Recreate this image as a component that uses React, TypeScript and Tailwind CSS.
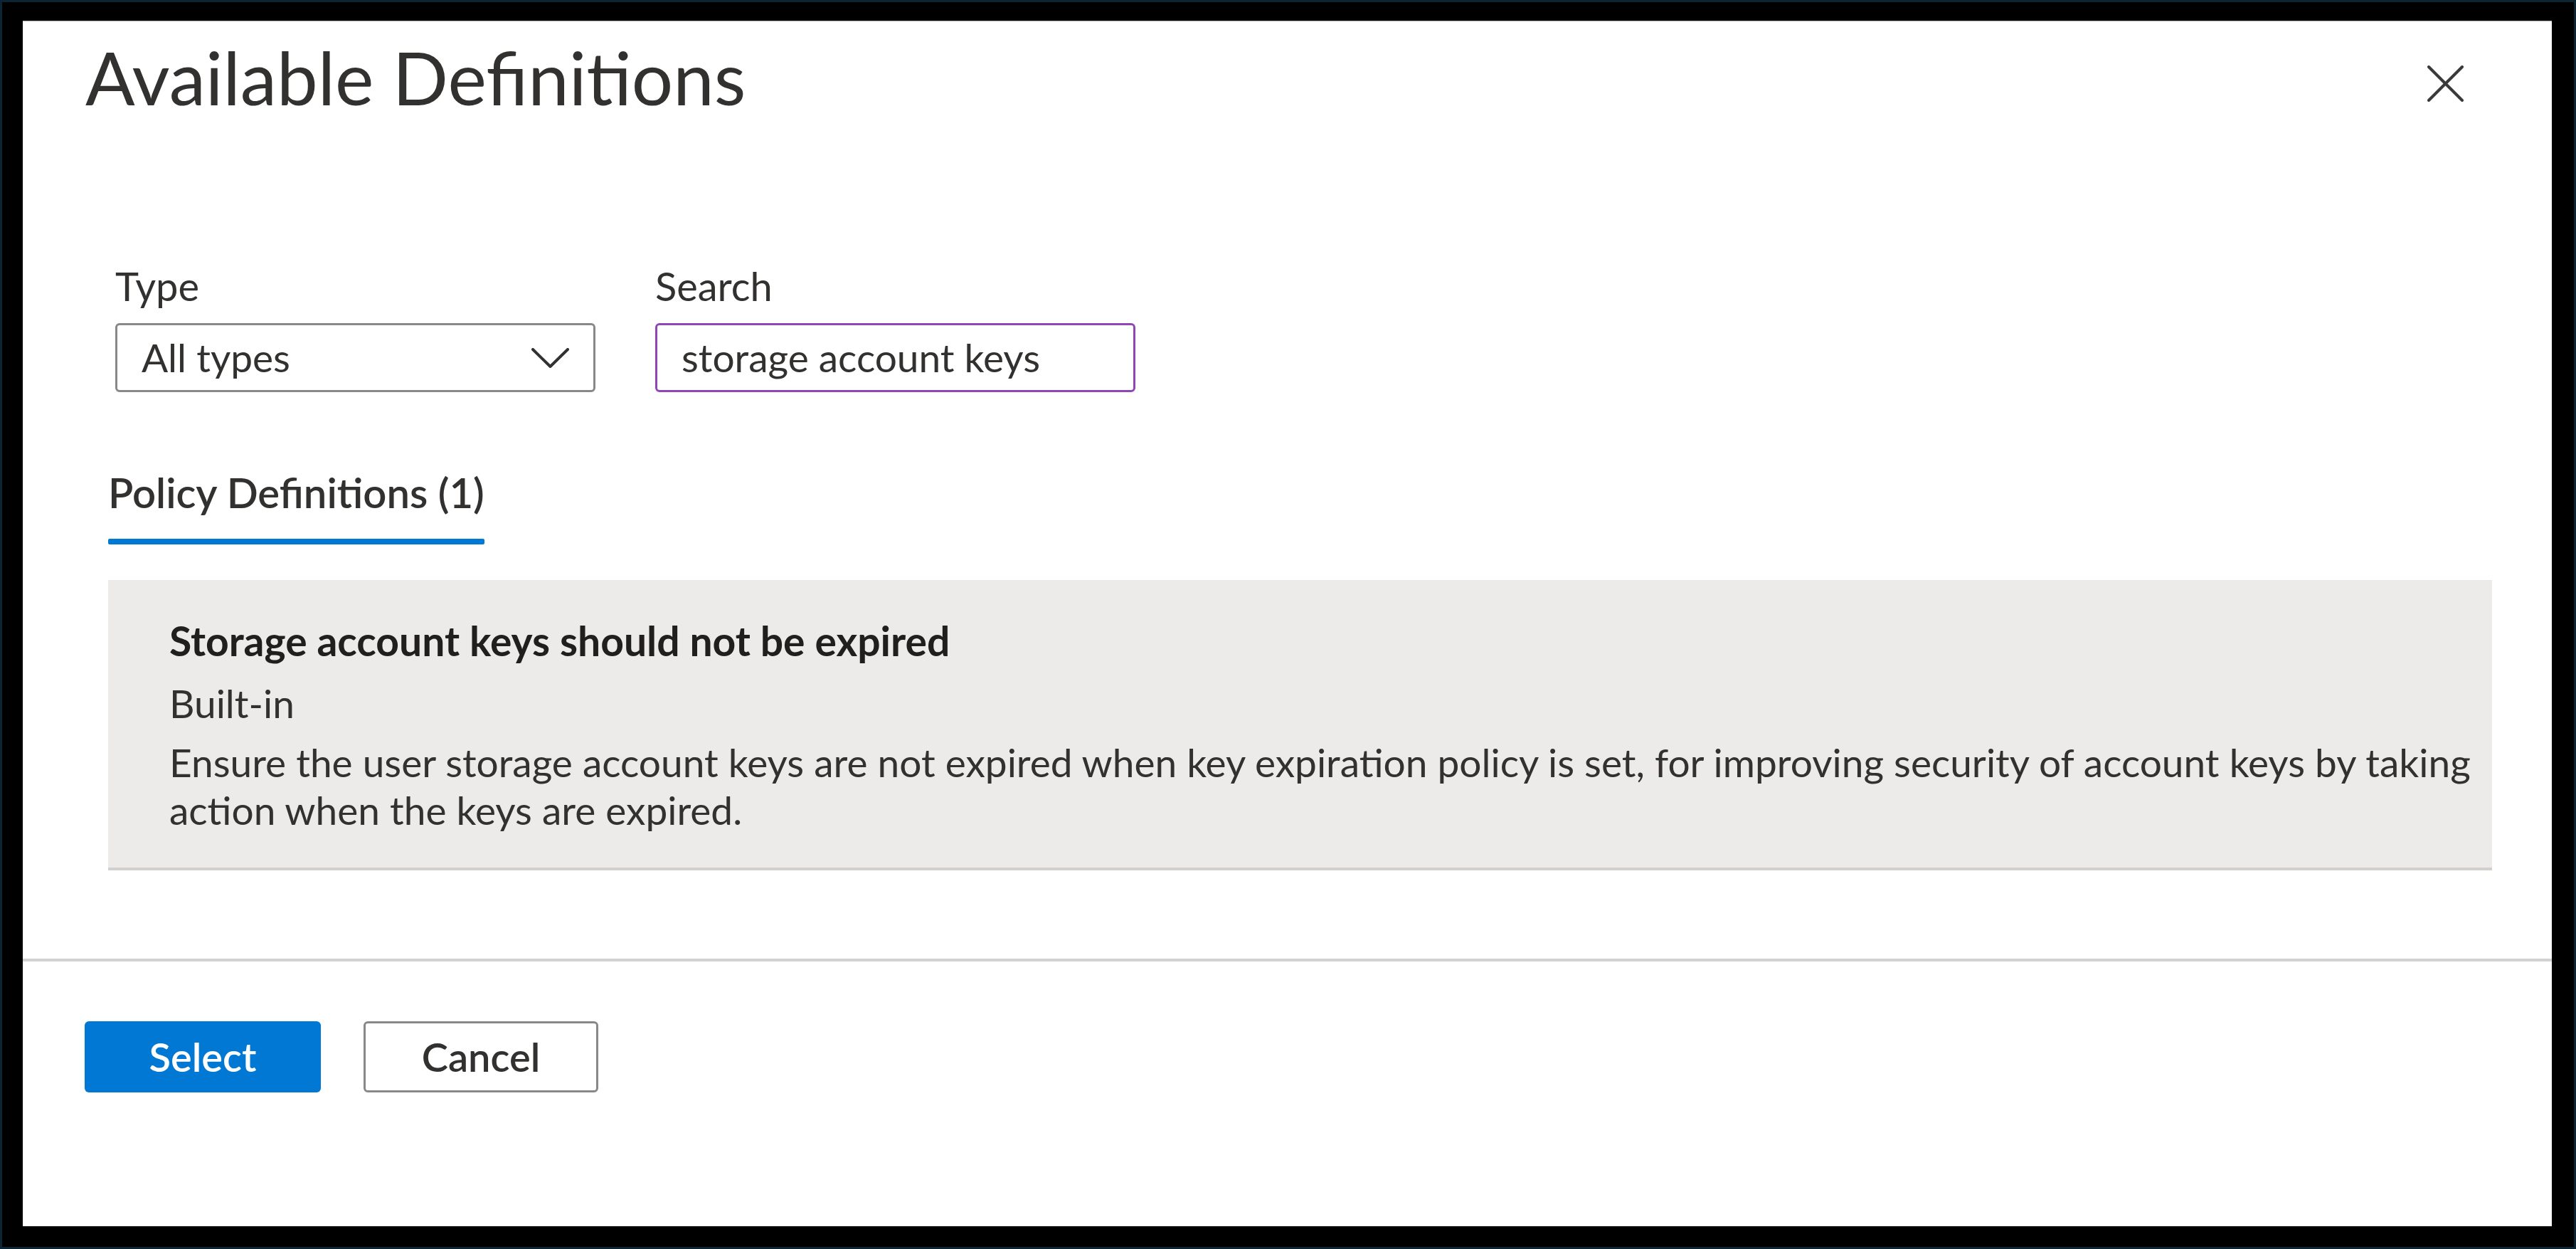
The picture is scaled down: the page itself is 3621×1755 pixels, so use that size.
import React from "react";

const ChevronDown = () => (
  <svg width="53" height="28" viewBox="0 0 53 28" fill="none">
    <polyline points="2,2 26.5,26 51,2" stroke="#323130" strokeWidth="4" strokeLinecap="round" strokeLinejoin="round" />
  </svg>
);

const CloseIcon = () => (
  <svg width="51" height="51" viewBox="0 0 51 51" fill="none">
    <line x1="2" y1="2" x2="49" y2="49" stroke="#3b3a39" strokeWidth="4" strokeLinecap="round" />
    <line x1="49" y1="2" x2="2" y2="49" stroke="#3b3a39" strokeWidth="4" strokeLinecap="round" />
  </svg>
);

const App = () => {
  const definicao = {
    titulo: "Storage account keys should not be expired",
    tipo: "Built-in",
    descricao:
      "Ensure the user storage account keys are not expired when key expiration policy is set, for improving security of account keys by taking action when the keys are expired.",
  };

  return (
    <div className="w-[3621px] h-[1755px] bg-[#0b2535] p-[3px] font-[Lato,'Liberation_Sans',sans-serif] text-[#323130]">
      <div className="h-full bg-black pl-[29px] pt-[26px] pr-[31px] pb-[29px]">
        <div className="h-full bg-white border-t border-[#a6a6a6] flex flex-col">
          {/* Cabeçalho */}
          <div className="flex items-start justify-between pl-[88px] pr-[124px] pt-[17px]">
            <h1 className="text-[103px] leading-[122px] font-normal">Available Definitions</h1>
            <button className="mt-[45px]">
              <CloseIcon />
            </button>
          </div>

          {/* Filtros */}
          <div className="flex gap-[84px] pl-[130px] mt-[199px]">
            <div className="flex flex-col gap-[19px]">
              <label className="text-[56px] leading-[67px]">Type</label>
              <div className="w-[675px] h-[97px] border-[3px] border-[#8a8886] rounded-[6px] flex items-center justify-between pl-[34px] pr-[34px]">
                <span className="text-[55px] leading-[67px]">All types</span>
                <ChevronDown />
              </div>
            </div>
            <div className="flex flex-col gap-[19px]">
              <label className="text-[56px] leading-[67px]">Search</label>
              <div className="w-[675px] h-[97px] border-[3px] border-[#9146b8] rounded-[6px] flex items-center pl-[34px]">
                <span className="text-[55px] leading-[67px]">storage account keys</span>
              </div>
            </div>
          </div>

          {/* Aba */}
          <div className="pl-[120px] mt-[106px]">
            <div className="inline-flex flex-col">
              <span className="text-[58px] leading-[69px] font-semibold">Policy Definitions (1)</span>
              <div className="mt-[31px] h-[8px] bg-[#0078d4] rounded-[2px]"></div>
            </div>
          </div>

          {/* Lista de definições */}
          <div className="ml-[120px] mr-[84px] mt-[50px] bg-[#edebe9] border-b-4 border-[#d2d0ce] pl-[86px] pr-[20px] pt-[52px] pb-[47px]">
            <p className="text-[57px] leading-[67px] font-bold text-[#201f1e]">{definicao.titulo}</p>
            <p className="text-[55px] leading-[67px] mt-[21px]">{definicao.tipo}</p>
            <p className="text-[55px] leading-[67px] mt-[16px]">{definicao.descricao}</p>
          </div>

          {/* Rodapé */}
          <div className="mt-[124px] border-t-[4px] border-[#d2d2d2]"></div>
          <div className="flex gap-[60px] pl-[87px] mt-[84px]">
            <button className="w-[332px] h-[100px] bg-[#0078d4] rounded-[6px] text-white text-[56px] font-semibold">
              Select
            </button>
            <button className="w-[330px] h-[100px] border-[3px] border-[#8a8886] rounded-[6px] text-[56px] font-semibold text-[#323130]">
              Cancel
            </button>
          </div>
        </div>
      </div>
    </div>
  );
};

export default App;
